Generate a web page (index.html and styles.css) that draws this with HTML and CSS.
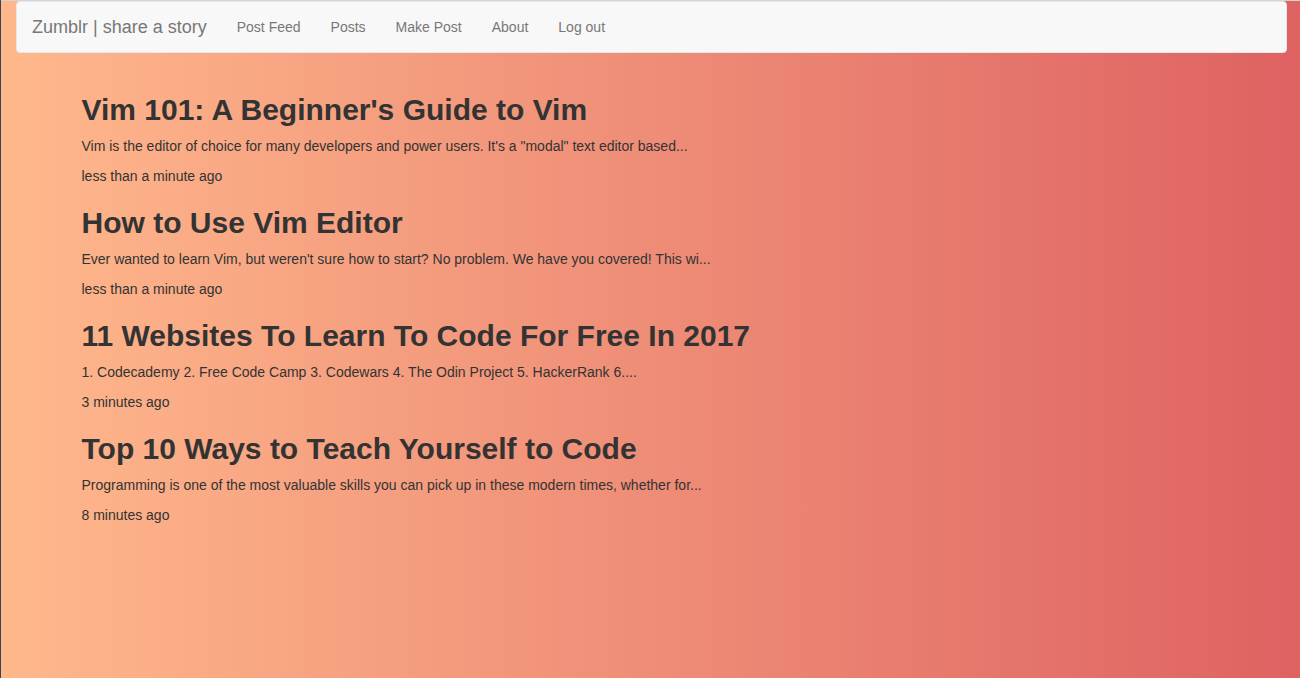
FILE: index.html
```html
<!DOCTYPE html>
<html lang="en">
<head>
<meta charset="utf-8">
<title>Zumblr | share a story</title>
<link rel="stylesheet" href="styles.css">
</head>
<body>
<nav class="navbar">
  <a class="brand" href="#">Zumblr | share a story</a>
  <ul class="nav">
    <li><a href="#">Post Feed</a></li>
    <li><a href="#">Posts</a></li>
    <li><a href="#">Make Post</a></li>
    <li><a href="#">About</a></li>
    <li><a href="#">Log out</a></li>
  </ul>
</nav>
<main class="container">
  <article class="post">
    <h2 class="post-title">Vim 101: A Beginner's Guide to Vim</h2>
    <p class="post-text">Vim is the editor of choice for many developers and power users. It's a "modal" text editor based...</p>
    <p class="post-time">less than a minute ago</p>
  </article>
  <article class="post">
    <h2 class="post-title">How to Use Vim Editor</h2>
    <p class="post-text">Ever wanted to learn Vim, but weren't sure how to start? No problem. We have you covered! This wi...</p>
    <p class="post-time">less than a minute ago</p>
  </article>
  <article class="post">
    <h2 class="post-title">11 Websites To Learn To Code For Free In 2017</h2>
    <p class="post-text">1. Codecademy 2. Free Code Camp 3. Codewars 4. The Odin Project 5. HackerRank 6....</p>
    <p class="post-time">3 minutes ago</p>
  </article>
  <article class="post">
    <h2 class="post-title">Top 10 Ways to Teach Yourself to Code</h2>
    <p class="post-text">Programming is one of the most valuable skills you can pick up in these modern times, whether for...</p>
    <p class="post-time">8 minutes ago</p>
  </article>
</main>
</body>
</html>
```

FILE: styles.css
```css
* { box-sizing: border-box; }

html {
  height: 100%;
  background: #3b4650;
}

body {
  margin: 0 0 0 1px;
  min-height: 100%;
  border-top: 1px solid #d4d4d4;
  background: linear-gradient(to right, #ffb88c, #de6262);
  font-family: "Liberation Sans", Arial, Helvetica, sans-serif;
  font-size: 14px;
  line-height: 20px;
  color: #333;
  overflow: hidden;
}

.navbar {
  display: flex;
  align-items: center;
  min-height: 52px;
  margin: 0 13px 20px 15px;
  background: #f8f8f8;
  border: 1px solid #e7e7e7;
  border-radius: 4px;
  padding: 0 15px;
}

.brand {
  font-size: 18px;
  line-height: 20px;
  padding: 15px 15px 15px 0;
  color: #777;
  text-decoration: none;
}

.nav {
  display: flex;
  list-style: none;
  margin: 0;
  padding: 0;
}

.nav a {
  display: block;
  padding: 15px;
  line-height: 20px;
  color: #777;
  text-decoration: none;
}

.container {
  display: flow-root;
  width: 1170px;
  margin: 0 auto;
  padding: 0 15px 0 16px;
}

.post-title {
  margin: 20px 0 10px;
  font-size: 30px;
  line-height: 33px;
  font-weight: bold;
}

.post-text,
.post-time {
  margin: 0 0 10px;
}
```
